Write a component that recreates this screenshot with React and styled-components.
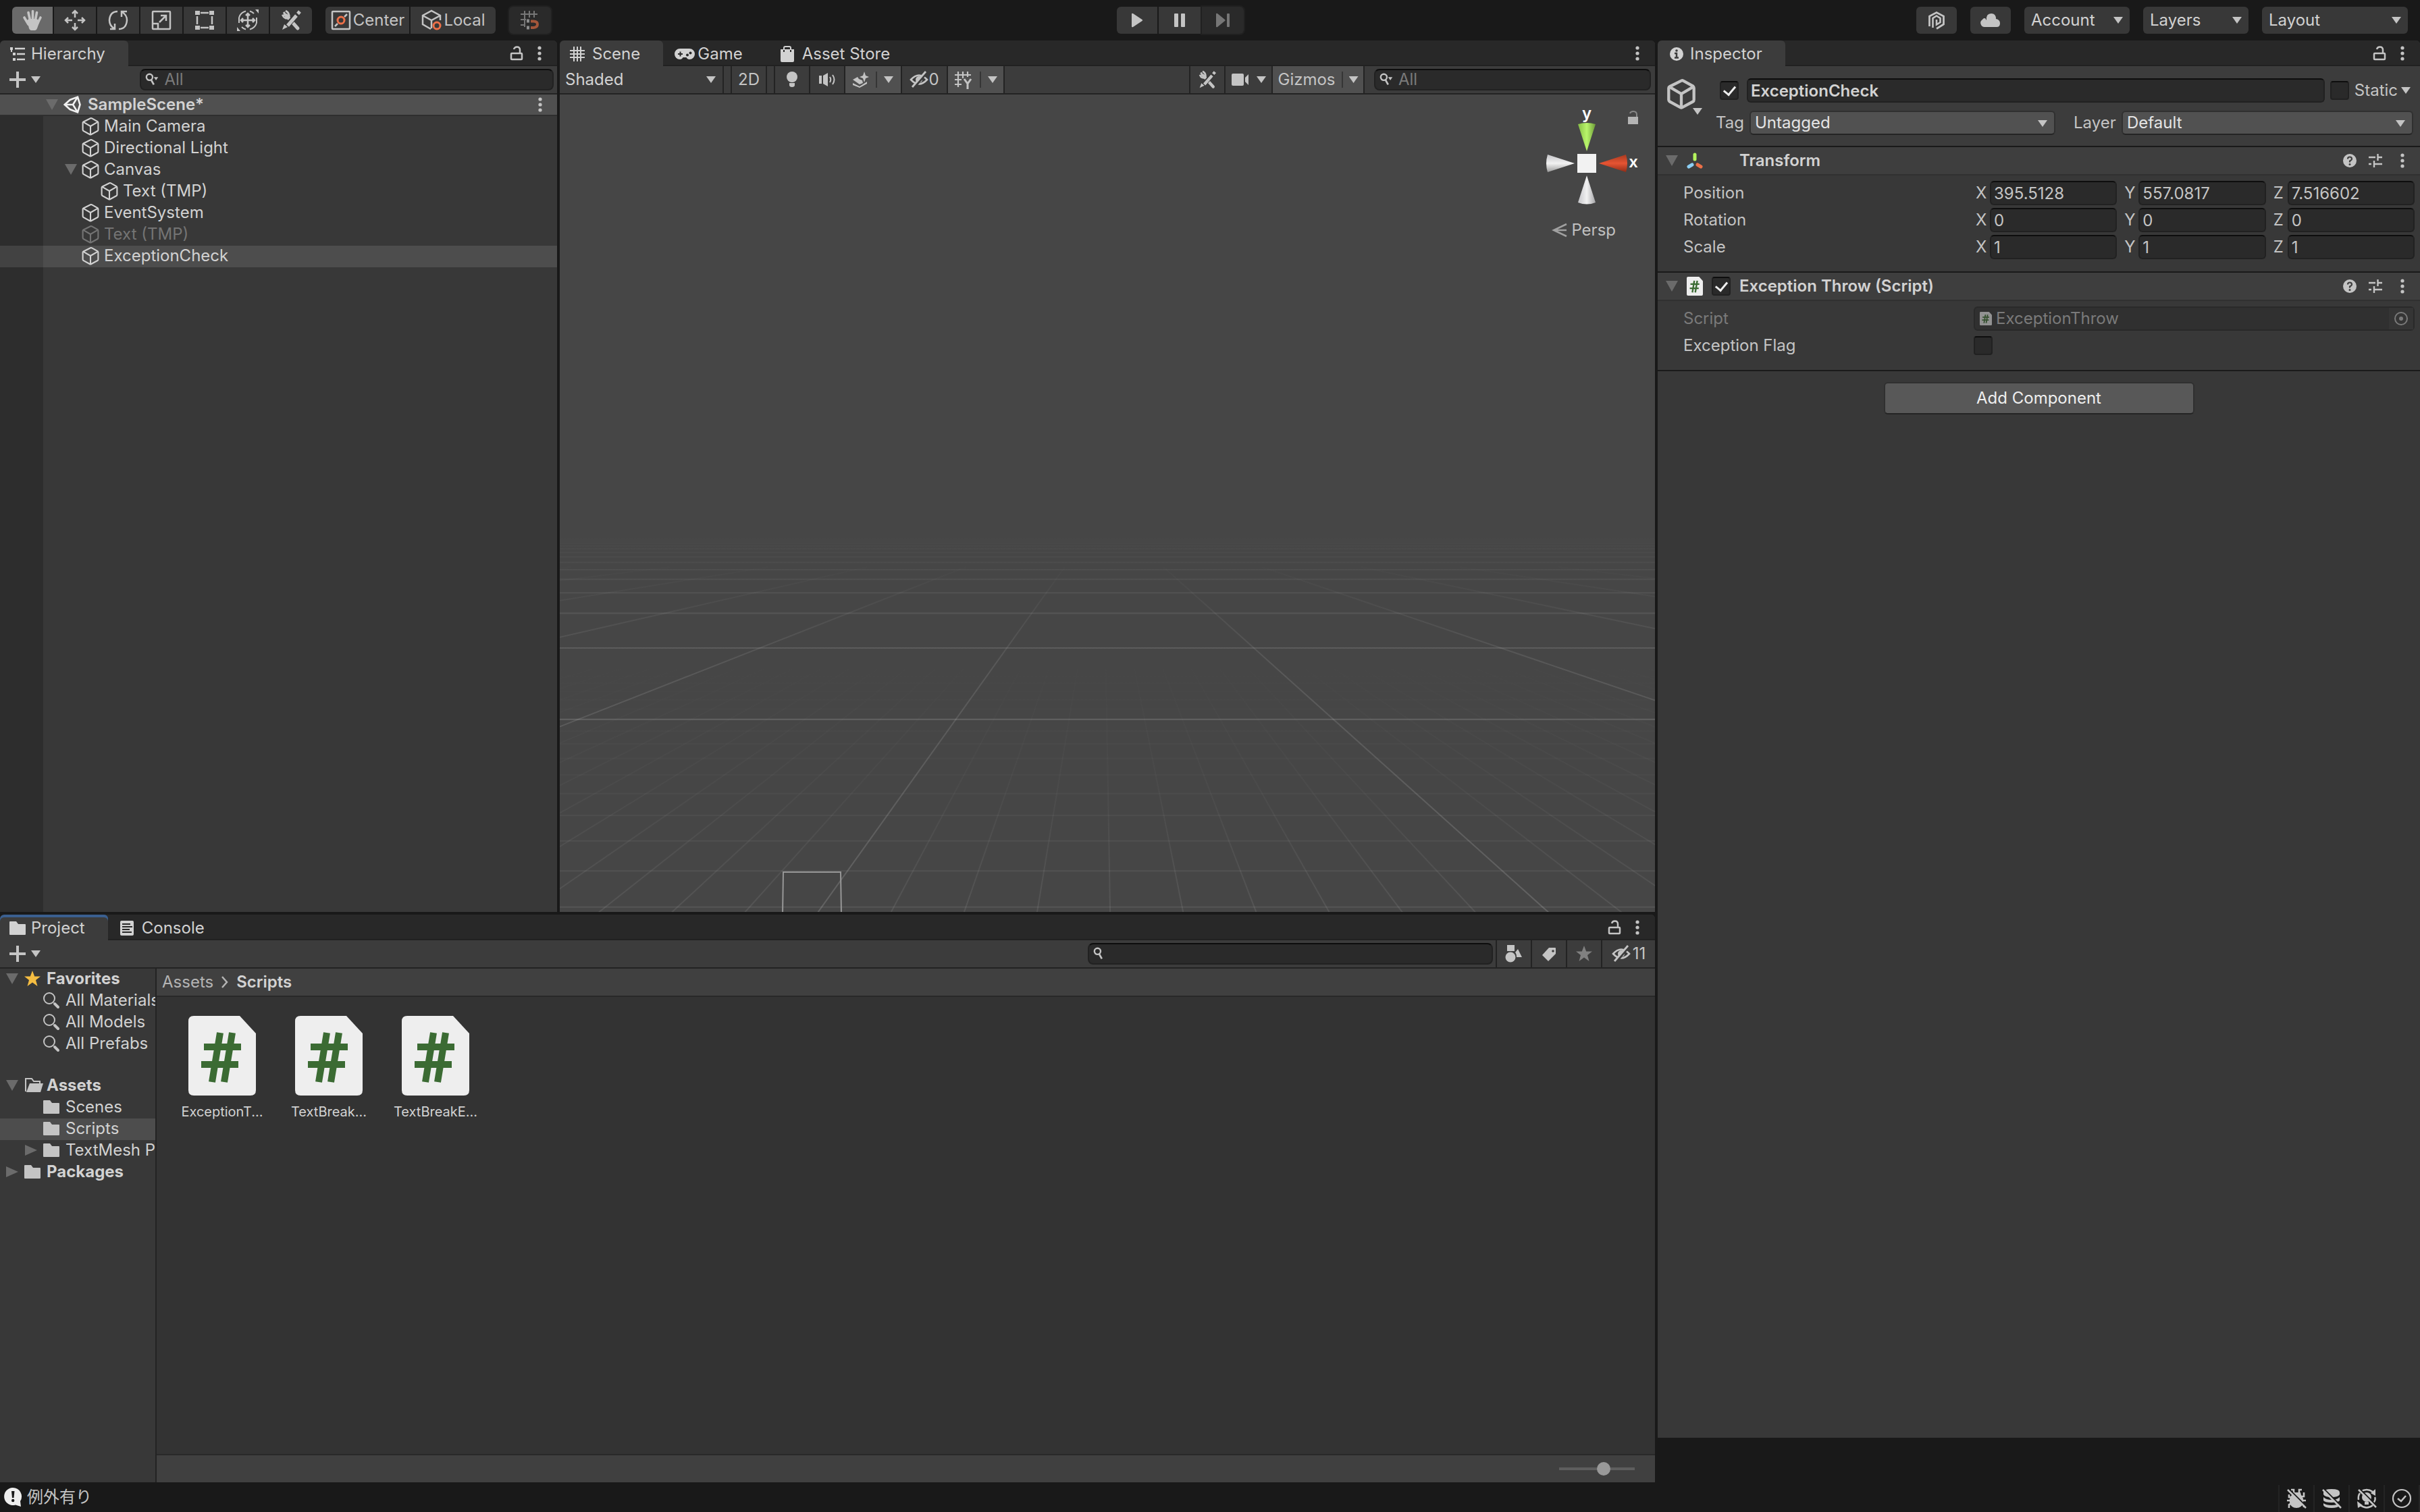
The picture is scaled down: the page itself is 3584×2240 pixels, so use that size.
import React from "react";
import styled, { createGlobalStyle, css } from "styled-components";

const GlobalStyle = createGlobalStyle`
  * {
    box-sizing: border-box;
  }
  body {
    margin: 0;
    background: #191919;
    color: #d2d2d2;
    font-family: Inter, "Noto Sans CJK JP", sans-serif;
    font-size: 24px;
    line-height: 32px;
  }
  button, input, select {
    font: inherit;
    color: inherit;
    margin: 0;
  }
  button {
    border: 0;
    padding: 0;
    background: none;
  }
  ul {
    list-style: none;
    margin: 0;
    padding: 0;
  }
`;

const Svg = styled.svg`
  display: block;
  flex: none;
  overflow: visible;
  fill: none;
  stroke: currentColor;
  stroke-width: 2.5;
`;

function Icon({ size = 32, box = 32, children }) {
  return (
    <Svg width={size} height={size} viewBox={`0 0 ${box} ${box}`} aria-hidden="true">
      {children}
    </Svg>
  );
}

const Solid = ({ d }) => <path d={d} fill="currentColor" stroke="none" />;

/* ---------- icons ---------- */

const HandIcon = () => (
  <Icon>
    <path d="M4 12L10 22M10 4.500L13 18M16.500 2.500V18M22.500 4.500L20 18M28 12L23 22" strokeWidth="3.600" strokeLinecap="round" />
    <Solid d="M8 16L11 28Q12 31 14 31H20Q22 31 23 28L27 17L22 14H11z" />
  </Icon>
);

const MoveIcon = () => (
  <Icon>
    <path d="M16 2V12M16 20V30M2 16H12M20 16H30" />
    <path d="M12 6L16 2L20 6M12 26L16 30L20 26M6 12L2 16L6 20M26 12L30 16L26 20" />
  </Icon>
);

const RotateIcon = () => (
  <Icon>
    <path d="M15 3Q4 3 3 16Q3 24 10 28M4 29H11V21" />
    <path d="M17 29Q28 29 29 16Q29 8 22 4M29 3H21V11" />
  </Icon>
);

const ScaleIcon = () => (
  <Icon>
    <rect x="3" y="3" width="26" height="26" rx="1" />
    <path d="M4 21H11V28M13 19L23 9M15 9H23V17" />
  </Icon>
);

const RectIcon = () => (
  <Icon>
    <path d="M10 5H22M10 27H22M5 10V22M27 10V22" />
    <Solid d="M2 2h7v6H2zM23 2h7v6h-7zM2 24h7v6H2zM23 24h7v6h-7z" />
  </Icon>
);

const TransformToolIcon = () => (
  <Icon>
    <path d="M16 6V26M6 16H26M13 9L16 6L19 9M13 23L16 26L19 23M9 13L6 16L9 19M23 13L26 16L23 19" />
    <path d="M3 12A14 14 0 0 1 13 2.500M19 2.500A14 14 0 0 1 25 6M29 12V20M29 20A14 14 0 0 1 19 29.500M13 29.500A14 14 0 0 1 7 26M3 20V12" strokeWidth="2" />
    <Solid d="M27 0H32V6zM0 26V32H5z" />
  </Icon>
);

const ToolsIcon = ({ size }) => (
  <Icon size={size}>
    <path d="M9 9L26 28" strokeWidth="5" strokeLinecap="round" />
    <path d="M5 4L8 8L4 9A6 6 0 0 0 13 12Q14 5 8 2" strokeWidth="3" />
    <path d="M28 4L10 24" strokeWidth="8" stroke="#383838" />
    <path d="M24 9L11 24" strokeWidth="5" />
    <path d="M29 3L26 6.500" strokeWidth="5" />
    <Solid d="M3 30L6 22L11 26z" />
  </Icon>
);

const PivotIcon = () => (
  <Icon>
    <rect x="3" y="3" width="26" height="26" rx="1" />
    <path d="M7 25L11 21M21 11L25 7" />
    <circle cx="16" cy="16" r="5" stroke="#ed7048" strokeWidth="3" />
  </Icon>
);

const LocalIcon = () => (
  <Icon>
    <path d="M15 29L3 22V9L16 2L29 9V16M3 9L16 16L29 9M16 16V28" />
    <circle cx="24" cy="24" r="5" stroke="#ed7048" strokeWidth="3" />
  </Icon>
);

const SnapIcon = () => (
  <Icon>
    <path d="M2 7H27M2 15H10M8 2V26M15 2V12M22 2V12M2 23H8" strokeWidth="2" />
    <path d="M11 17H16M11 27H16" strokeWidth="5" stroke="#8d8d8d" strokeDasharray="4 1" />
    <path d="M17 17.500H21Q27 17.500 27 22T21 27H17" strokeWidth="4" stroke="#a3563a" />
  </Icon>
);

const PlayIcon = () => (
  <Icon>
    <Solid d="M8 7Q8 5 10 6L23.500 15Q25 16 23.500 17L10 26Q8 27 8 25z" />
  </Icon>
);

const PauseIcon = () => (
  <Icon>
    <rect x="8" y="6" width="6" height="20" rx="1" fill="currentColor" stroke="none" />
    <rect x="18" y="6" width="6" height="20" rx="1" fill="currentColor" stroke="none" />
  </Icon>
);

const StepIcon = () => (
  <Icon>
    <Solid d="M6 7Q6 5 8 6L19 15Q20.500 16 19 17L8 26Q6 27 6 25z" />
    <rect x="22" y="6" width="4" height="20" rx="1" fill="currentColor" stroke="none" />
  </Icon>
);

const CollabIcon = () => (
  <Icon>
    <path d="M5.500 25V10L16 4.500L26.500 10V22L16 28.500" strokeWidth="2.800" />
    <path d="M10.500 27V13L16 9.500L21.500 13V19L16 22.500V15" strokeWidth="2.600" />
  </Icon>
);

const CloudIcon = () => (
  <Icon>
    <Solid d="M8 26A6 6 0 0 1 4 15Q5 12.500 8 13L10 16Q9 6 17 6Q24 6 24 14Q30 15 30 20.500Q30 26 25 26z" />
  </Icon>
);

const CubeIcon = ({ size = 32, weight = 2.4 }) => (
  <Icon size={size}>
    <path d="M16 2.500Q17 2 18 2.500L28 8Q29 9 29 10V22Q29 23.500 28 24L17 30Q16 30.500 15 30L4 24Q3 23 3 22V10Q3 9 4 8.500z" strokeWidth={weight} />
    <path d="M4 9L16 16L28 9M16 16V30" strokeWidth={weight} />
  </Icon>
);

const UnityIcon = () => (
  <Icon size={28}>
    <path d="M2 16L11 8L24 3L28 16L24 29L11 24zM2 16H16M16 16L24 3M16 16L24 29" stroke="#f0f0f0" strokeWidth="3" />
  </Icon>
);

const HierarchyIcon = () => (
  <Icon size={24} box={24}>
    <path d="M8 4H23M11 12H23M11 20H23" strokeWidth="2.600" />
    <Solid d="M1 2h4v4H1zM5 10h4v4H5zM5 18h4v4H5zM2 6h2v3H2z" />
  </Icon>
);

const LockIcon = () => (
  <Icon size={24} box={24}>
    <rect x="4" y="12" width="16" height="9" rx="1" />
    <path d="M8 6Q9 2.500 12.500 2.500Q17 2.500 17 7V12" />
  </Icon>
);

const KebabIcon = () => (
  <Icon size={24} box={24}>
    <circle cx="12" cy="4" r="2.600" fill="currentColor" stroke="none" />
    <circle cx="12" cy="12" r="2.600" fill="currentColor" stroke="none" />
    <circle cx="12" cy="20" r="2.600" fill="currentColor" stroke="none" />
  </Icon>
);

const PlusIcon = () => (
  <Icon size={24} box={24}>
    <path d="M12 0V24M0 12H24" strokeWidth="4" />
  </Icon>
);

const SearchIcon = ({ menu }) => (
  <Icon size={22} box={24}>
    <circle cx="7" cy="8" r="5" strokeWidth="2.600" />
    <path d="M10 13L14 20" strokeWidth="3" />
    {menu && <Solid d="M14 8H21L17.500 13z" />}
  </Icon>
);

const BigSearchIcon = () => (
  <Icon size={24} box={24}>
    <circle cx="9" cy="9" r="8" strokeWidth="2" />
    <path d="M17 17L22 22" strokeWidth="4" strokeLinecap="round" />
  </Icon>
);

const SceneIcon = () => (
  <Icon size={24} box={24}>
    <path d="M7 1V23M12 1V23M17 1V23M1 7H23M1 12H23M1 17H23" strokeWidth="2" />
  </Icon>
);

const GameIcon = () => (
  <Icon size={28} box={28}>
    <Solid d="M7 6H21A7.500 7.500 0 0 1 21 22Q18 22 16.500 19H11.500Q10 22 7 22A7.500 7.500 0 0 1 7 6z" />
    <path d="M4 14H11M7.500 10.500V17.500" stroke="#282828" strokeWidth="2" />
    <circle cx="18" cy="15.500" r="2" fill="#282828" stroke="none" />
    <circle cx="22.500" cy="12.500" r="2" fill="#282828" stroke="none" />
  </Icon>
);

const StoreIcon = () => (
  <Icon size={24} box={24}>
    <Solid d="M2 5H22V22Q22 24 20 24H4Q2 24 2 22z" />
    <path d="M7 6V3Q7 1 9 1H15Q17 1 17 3V6" strokeWidth="2" />
    <path d="M7 6V9M17 6V9" stroke="#282828" strokeWidth="2" />
  </Icon>
);

const InfoIcon = () => (
  <Icon size={20} box={20}>
    <circle cx="10" cy="10" r="10" fill="currentColor" stroke="none" />
    <path d="M7 9H10V15M7 15.500H13" stroke="#3c3c3c" strokeWidth="2.500" />
    <circle cx="10" cy="5" r="1.800" fill="#3c3c3c" stroke="none" />
  </Icon>
);

const BulbIcon = () => (
  <Icon size={24} box={24}>
    <circle cx="12" cy="8" r="8" fill="currentColor" stroke="none" />
    <Solid d="M8 17H16V20Q16 23 12 23T8 20z" />
  </Icon>
);

const AudioIcon = () => (
  <Icon size={24} box={24}>
    <Solid d="M0 6H4V18H0zM6 6L13 2V22L6 18z" />
    <path d="M16 8Q18.500 12 16 16M20 5Q25 12 20 19" strokeWidth="2" />
  </Icon>
);

const EffectsIcon = () => (
  <Icon size={24} box={24}>
    <Solid d="M17 0L19 6L24 8L19 10L17 16L15 10L10 8L15 6zM0 12L7 8L9 11L14 13L15 17L10 19zM0 17L10 22L21 15V18L10 24L0 20z" />
  </Icon>
);

const HiddenIcon = () => (
  <Icon size={28} box={28}>
    <path d="M2 14Q14 1 26 14Q14 27 2 14z" strokeWidth="2.600" />
    <circle cx="14" cy="14" r="5" fill="currentColor" stroke="none" />
    <path d="M5 27L25 3" stroke="#3c3c3c" strokeWidth="5" />
    <path d="M4 25L24 2" strokeWidth="2.800" />
  </Icon>
);

const GridAxisIcon = () => (
  <Icon size={28} box={28}>
    <path d="M1 7H25M1 14H11M1 21H11M6 2V25M13 2V12M20 2V10" strokeWidth="2.200" />
    <path d="M15 13L20 20L25 13M20 20V28" strokeWidth="3" />
  </Icon>
);

const CameraIcon = () => (
  <Icon size={28} box={28}>
    <rect x="1" y="5" width="18" height="18" rx="2" fill="currentColor" stroke="none" />
    <Solid d="M21 11L26 6V22L21 17z" />
  </Icon>
);

const FolderIcon = () => (
  <Icon size={24} box={24}>
    <Solid d="M0 3Q0 2 1 2H10L13 6H23Q24 6 24 7V21Q24 22 23 22H1Q0 22 0 21z" />
  </Icon>
);

const OpenFolderIcon = () => (
  <Icon size={28} box={28}>
    <path d="M2 23V4H11L14 8H23V11" strokeWidth="2" />
    <Solid d="M8 11H28L24 24H3z" />
  </Icon>
);

const ConsoleIcon = () => (
  <Icon size={22} box={22}>
    <rect x="0" y="0" width="20" height="22" rx="2" fill="currentColor" stroke="none" />
    <path d="M3 5H15M3 9H18M3 13H14M3 17H17" stroke="#282828" strokeWidth="1.800" />
  </Icon>
);

const StarIcon = ({ color = "currentColor" }) => (
  <Icon size={24} box={24}>
    <path d="M12 0L15.200 8.500H24L17 14L19.500 23L12 17.500L4.500 23L7 14L0 8.500H8.800z" fill={color} stroke="none" />
  </Icon>
);

const FilterTypeIcon = () => (
  <Icon size={26} box={26}>
    <Solid d="M3 0H14V9H3zM19 6L25 18H17Q17 13 15 11z" />
    <circle cx="8" cy="18" r="7.500" fill="currentColor" stroke="none" />
  </Icon>
);

const LabelIcon = () => (
  <Icon size={24} box={24}>
    <path d="M12 3H21Q22 3 22 4V12L11 23L2 14z" fill="currentColor" stroke="none" />
    <circle cx="18" cy="8" r="1.800" fill="#3c3c3c" stroke="none" />
  </Icon>
);

const HelpIcon = () => (
  <Icon size={20} box={20}>
    <circle cx="10" cy="10" r="10" fill="currentColor" stroke="none" />
    <path d="M7 7.500Q7 4.500 10 4.500T13 7.500Q13 9 10 10.500V12.500" stroke="#3e3e3e" strokeWidth="2.200" />
    <circle cx="10" cy="15.500" r="1.500" fill="#3e3e3e" stroke="none" />
  </Icon>
);

const PresetIcon = () => (
  <Icon size={20} box={20}>
    <path d="M0 5H10M13.500 0V10M13 5H20M0 15H4M8 10V20M8 15H20" strokeWidth="2.400" />
  </Icon>
);

const AxesIcon = () => (
  <Icon size={24} box={24}>
    <g strokeWidth="5" strokeLinecap="round">
      <path d="M12 3V10" stroke="#b4f35d" />
      <path d="M8 18L3 21" stroke="#8ccff5" />
      <path d="M16 18L21 21" stroke="#ed7048" />
    </g>
  </Icon>
);

function ScriptIcon({ width, height, paper = "#eeeeee", ink = "#3b6b33" }) {
  return (
    <Svg width={width} height={height} viewBox="0 0 100 118" preserveAspectRatio="none" aria-hidden="true">
      <path d="M8 0H76L100 26V110Q100 118 92 118H8Q0 118 0 110V8Q0 0 8 0z" fill={paper} stroke="none" />
      <path d="M47 25L35 98M65 25L53 98M23 46H78M19 72H74" stroke={ink} strokeWidth="10" />
    </Svg>
  );
}

const TargetIcon = () => (
  <Icon size={20} box={20}>
    <circle cx="10" cy="10" r="9" strokeWidth="2" />
    <circle cx="10" cy="10" r="3" fill="currentColor" stroke="none" />
  </Icon>
);

const ChevronIcon = () => (
  <Icon size={20} box={20}>
    <path d="M6 2L13 10L6 18" />
  </Icon>
);

const AlertIcon = () => (
  <Icon size={28} box={28}>
    <Solid d="M13 0A13 13 0 1 0 17 25.400L25 28L24 20A13 13 0 0 0 13 0z" />
    <path d="M11 5H15.500L14.500 15H12z" fill="#191919" stroke="none" />
    <circle cx="13.200" cy="19" r="2.200" fill="#191919" stroke="none" />
  </Icon>
);

const BugIcon = () => (
  <Icon size={28} box={28}>
    <Solid d="M8 5H20L21 9Q25 13 24 20Q22 28 14 28T4 20Q3 13 7 9z" />
    <path d="M6 1H10V5M22 1H18V5M0 17H6M22 17H28M3 8V12H8M25 5V11H21M3 28V23L7 21M25 27V23L21 21" strokeWidth="2.600" />
    <path d="M3 0L28 25" stroke="#191919" strokeWidth="2" />
    <path d="M1 1L28 28" />
  </Icon>
);

const CacheIcon = () => (
  <Icon size={28} box={28}>
    <Solid d="M2 5Q2 0 14 0T26 5V8Q24 12 14 12T2 8zM2 12Q6 16 14 16T26 12V17Q24 20 14 20T2 17zM2 21Q6 24 14 24T26 21V24Q24 28 14 28T2 24z" />
    <path d="M3 0L28 25" stroke="#191919" strokeWidth="2" />
    <path d="M1 1L28 28" />
  </Icon>
);

const LightingIcon = () => (
  <Icon size={28} box={28}>
    <circle cx="14" cy="12" r="7" fill="currentColor" stroke="none" />
    <path d="M11 21H17" strokeWidth="4" />
    <path d="M5 4Q14 -2 23 4M26 12Q28 15 24 21M23 24Q14 31 5 24M2 16Q1 10 4 6" />
    <Solid d="M20 6L27 0V10zM0 18L1 28L8 24z" />
    <path d="M4 0L28 24" stroke="#191919" strokeWidth="2" />
    <path d="M2 1L28 27" />
  </Icon>
);

const ReadyIcon = () => (
  <Icon size={28} box={28}>
    <circle cx="14" cy="14" r="13" strokeWidth="2.200" />
    <path d="M8 14L13 18L20 10" />
  </Icon>
);

/* ---------- shared parts ---------- */

const Arrow = styled.span`
  flex: none;
  display: block;
  width: ${(p) => (p.$large ? 18 : 14)}px;
  height: ${(p) => (p.$large ? 16 : 10)}px;
  background: ${(p) => (p.$large ? "#6b6b6b" : "#c4c4c4")};
  clip-path: ${(p) => (p.$closed ? "polygon(0 0, 100% 50%, 0 100%)" : "polygon(0 0, 100% 0, 50% 100%)")};
`;

const Panel = styled.section`
  display: flex;
  flex-direction: column;
  min-width: 0;
  min-height: 0;
  overflow: hidden;
  background: #383838;
  border-radius: 6px 6px 0 0;
`;

const TabBar = styled.div`
  flex: none;
  display: flex;
  height: 38px;
  background: #282828;
  box-shadow: inset 0 -2px #212121;
`;

const Tab = styled.button`
  display: flex;
  align-items: center;
  gap: ${(p) => p.$gap || 10}px;
  padding: 2px 16px 0 18px;
  ${(p) =>
    p.$active &&
    css`
      background: #3c3c3c;
      border-radius: 6px 6px 0 0;
      padding-left: 14px;
      padding-right: 34px;
    `}
  ${(p) =>
    p.$focused &&
    css`
      box-shadow: inset 0 4px #3a5f8f;
    `}
`;

const TabActions = styled.div`
  display: flex;
  align-items: center;
  gap: 10px;
  margin-left: auto;
  padding-right: 14px;
  color: #c4c4c4;
`;

const IconButton = styled.button`
  display: flex;
  align-items: center;
  justify-content: center;
  gap: 8px;
  color: #c4c4c4;
`;

const ToolStrip = styled.div`
  flex: none;
  display: flex;
  align-items: stretch;
  height: 42px;
  background: #3c3c3c;
  border-bottom: 2px solid #232323;
`;

const StripButton = styled.button`
  display: flex;
  align-items: center;
  justify-content: center;
  gap: ${(p) => p.$gap || 0}px;
  width: ${(p) => p.$width}px;
  border-right: 2px solid #232323;
  color: ${(p) => (p.$dim ? "#808080" : "#c4c4c4")};
  background: ${(p) => (p.$on ? "#505050" : "transparent")};
`;

const Divider = styled.span`
  width: 2px;
  height: 24px;
  background: #353535;
`;

const Spacer = styled.div`
  flex: 1;
`;

const field = css`
  background: #2a2a2a;
  border: 2px solid #212121;
  border-top-color: #0d0d0d;
  border-radius: 6px;
`;

const SearchBox = styled.label`
  ${field}
  display: flex;
  align-items: center;
  gap: 6px;
  align-self: center;
  width: ${(p) => p.$width};
  height: 32px;
  padding: 0 6px;
  border-radius: 8px;
  color: #c4c4c4;
`;

const SearchInput = styled.input.attrs({ type: "text" })`
  flex: 1;
  min-width: 0;
  height: 28px;
  border: 0;
  padding: 0;
  outline: 0;
  background: none;
  &::placeholder {
    color: #7a7a7a;
    opacity: 1;
  }
`;

const CheckBox = styled.input.attrs({ type: "checkbox" })`
  ${field}
  flex: none;
  appearance: none;
  display: grid;
  place-items: center;
  width: 28px;
  height: 28px;
  border-radius: 4px;
  &:checked::after {
    content: "";
    width: 8px;
    height: 14px;
    margin-bottom: 4px;
    border: solid #eeeeee;
    border-width: 0 3px 3px 0;
    transform: rotate(40deg);
  }
`;

/* ---------- top toolbar ---------- */

const Shell = styled.div`
  display: grid;
  grid-template-rows: 60px minmax(0, 1fr) 44px;
  height: 100vh;
`;

const TopBar = styled.header`
  display: grid;
  grid-template-columns: 1636fr auto 1724fr;
  align-items: center;
  padding: 0 18px;
`;

const Group = styled.div`
  display: flex;
  justify-content: ${(p) => p.$align || "flex-start"};
  gap: 20px;
`;

const Segments = styled.div`
  display: flex;
  gap: 2px;
  & > button:first-child {
    border-radius: 6px 0 0 6px;
  }
  & > button:last-child {
    border-radius: 0 6px 6px 0;
  }
`;

const ToolButton = styled.button`
  display: flex;
  align-items: center;
  justify-content: center;
  gap: 2px;
  width: ${(p) => p.$width || 62}px;
  height: 40px;
  color: #c4c4c4;
  background: ${(p) => (p.$active ? "#6a6a6a" : "#383838")};
  ${(p) =>
    p.$single &&
    css`
      border-radius: 6px;
    `}
  &:disabled {
    color: #767676;
    background: #2a2a2a;
    box-shadow: 0 0 0 2px #202020;
  }
`;

const TopSelect = styled.button`
  display: flex;
  align-items: center;
  justify-content: space-between;
  width: ${(p) => p.$width}px;
  height: 40px;
  padding: 0 10px;
  border-radius: 6px;
  background: #383838;
`;

function TopToolbar() {
  return (
    <TopBar>
      <Group>
        <Segments>
          <ToolButton $width={60} $active aria-label="Hand tool"><HandIcon /></ToolButton>
          <ToolButton aria-label="Move tool"><MoveIcon /></ToolButton>
          <ToolButton aria-label="Rotate tool"><RotateIcon /></ToolButton>
          <ToolButton aria-label="Scale tool"><ScaleIcon /></ToolButton>
          <ToolButton aria-label="Rect tool"><RectIcon /></ToolButton>
          <ToolButton aria-label="Transform tool"><TransformToolIcon /></ToolButton>
          <ToolButton aria-label="Custom tools"><ToolsIcon /></ToolButton>
        </Segments>
        <Segments>
          <ToolButton $width={124}><PivotIcon />Center</ToolButton>
          <ToolButton $width={126}><LocalIcon />Local</ToolButton>
        </Segments>
        <ToolButton $single disabled aria-label="Grid snapping"><SnapIcon /></ToolButton>
      </Group>
      <Segments>
        <ToolButton $width={60} aria-label="Play"><PlayIcon /></ToolButton>
        <ToolButton aria-label="Pause"><PauseIcon /></ToolButton>
        <ToolButton disabled aria-label="Step"><StepIcon /></ToolButton>
      </Segments>
      <Group $align="flex-end">
        <ToolButton $width={60} $single aria-label="Collaborate"><CollabIcon /></ToolButton>
        <ToolButton $width={60} $single aria-label="Services"><CloudIcon /></ToolButton>
        <TopSelect $width={156}>Account<Arrow /></TopSelect>
        <TopSelect $width={156}>Layers<Arrow /></TopSelect>
        <TopSelect $width={216}>Layout<Arrow /></TopSelect>
      </Group>
    </TopBar>
  );
}

/* ---------- workspace ---------- */

const Workspace = styled.main`
  display: grid;
  grid-template-columns: minmax(0, 2451fr) minmax(0, 1129fr);
  gap: 4px;
  min-height: 0;
`;

const LeftArea = styled.div`
  display: grid;
  grid-template-rows: minmax(0, 1291fr) minmax(0, 841fr);
  gap: 4px;
  min-height: 0;
`;

const UpperArea = styled.div`
  display: grid;
  grid-template-columns: minmax(0, 825fr) minmax(0, 1622fr);
  gap: 4px;
  min-height: 0;
`;

/* ---------- hierarchy ---------- */

const CreateStrip = styled(ToolStrip)`
  justify-content: space-between;
  padding: 0 5px 0 14px;
`;

const SceneRow = styled.div`
  flex: none;
  display: flex;
  align-items: center;
  height: 32px;
  padding: 0 13px 0 68px;
  background: #505050;
  border-bottom: 2px solid #2e2e2e;
  font-weight: 600;
  gap: 8px;
`;

const Tree = styled.ul`
  flex: 1;
  background: linear-gradient(to right, #2d2d2d 64px, transparent 64px);
`;

const TreeItem = styled.li`
  display: flex;
  background: ${(p) => (p.$selected ? "linear-gradient(to right, #424242 64px, #4d4d4d 64px)" : "none")};
`;

const TreeButton = styled.button`
  flex: 1;
  display: flex;
  align-items: center;
  gap: 6px;
  height: 32px;
  padding: 0 0 2px ${(p) => 96 + p.$depth * 28}px;
  color: ${(p) => (p.$dim ? "#747474" : "#d2d2d2")};
`;

const ArrowSlot = styled.span`
  flex: none;
  display: flex;
  width: 18px;
`;

const objects = [
  { name: "Main Camera", depth: 0 },
  { name: "Directional Light", depth: 0 },
  { name: "Canvas", depth: 0, open: true },
  { name: "Text (TMP)", depth: 1 },
  { name: "EventSystem", depth: 0 },
  { name: "Text (TMP)", depth: 0, dim: true },
  { name: "ExceptionCheck", depth: 0, selected: true },
];

function Hierarchy() {
  return (
    <Panel>
      <TabBar>
        <Tab $active $gap={8}><HierarchyIcon />Hierarchy</Tab>
        <TabActions>
          <IconButton aria-label="Lock"><LockIcon /></IconButton>
          <IconButton aria-label="Menu"><KebabIcon /></IconButton>
        </TabActions>
      </TabBar>
      <CreateStrip>
        <IconButton aria-label="Create"><PlusIcon /><Arrow /></IconButton>
        <SearchBox $width="76%">
          <SearchIcon menu />
          <SearchInput placeholder="All" aria-label="Search hierarchy" />
        </SearchBox>
      </CreateStrip>
      <SceneRow>
        <Arrow $large />
        <UnityIcon />
        <span>SampleScene*</span>
        <Spacer />
        <IconButton aria-label="Scene menu"><KebabIcon /></IconButton>
      </SceneRow>
      <Tree>
        {objects.map((o, i) => (
          <TreeItem key={i} $selected={o.selected}>
            <TreeButton $depth={o.depth} $dim={o.dim}>
              <ArrowSlot>{o.open && <Arrow $large />}</ArrowSlot>
              <CubeIcon size={28} />
              {o.name}
            </TreeButton>
          </TreeItem>
        ))}
      </Tree>
    </Panel>
  );
}

/* ---------- scene view ---------- */

const Viewport = styled.div`
  position: relative;
  flex: 1;
  min-height: 0;
  overflow: hidden;
  background: #464646;
`;

const GridDrawing = styled.svg`
  position: absolute;
  inset: 0;
  width: 100%;
  height: 100%;
`;

const Gizmo = styled.svg`
  position: absolute;
  top: 8px;
  right: 24px;
  width: 140px;
  height: 170px;
  font-size: 24px;
  line-height: 24px;
  font-weight: 600;
`;

const Projection = styled.button`
  position: absolute;
  top: 185px;
  right: 58px;
  display: flex;
  align-items: center;
  gap: 6px;
  color: #c0c0c0;
`;

const ViewLock = styled.button`
  position: absolute;
  top: 24px;
  right: 23px;
  color: #b4b4b4;
`;

const ShadingButton = styled(StripButton)`
  justify-content: space-between;
  padding: 0 10px 0 8px;
  color: #d2d2d2;
`;

const Gap = styled.span`
  width: 12px;
  border-right: 2px solid #232323;
`;

const SearchCell = styled.div`
  display: flex;
  padding: 0 6px 0 14px;
`;

const VX = 805;
const VY = 620;

/* perspective ground grid, every tenth line is a major one */
function GroundGrid() {
  const rays = [];
  for (let i = -64; i <= 76; i++) {
    const major = (i + 4) % 10 === 0;
    const slope = (10 + i * 107) / 585;
    const from = major ? 80 : 220;
    rays.push(
      <line
        key={i}
        x1={VX + slope * from}
        y1={VY + from}
        x2={VX + slope * 640}
        y2={VY + 640}
        stroke={major ? "url(#majorRay)" : "url(#minor)"}
      />
    );
  }
  const rows = [];
  for (let k = -10; k <= 130; k++) {
    const major = k % 10 === 0;
    const d = 1 / (0.00327 + k * 0.000173);
    if (!major && d < 220) continue;
    rows.push(
      <line key={k} x1="0" x2="1622" y1={VY + d} y2={VY + d + 0.01} stroke={major ? "url(#majorRow)" : "url(#minor)"} />
    );
  }
  return (
    <GridDrawing viewBox="0 0 1622 1211" preserveAspectRatio="xMidYMax slice" aria-hidden="true">
      <defs>
        <linearGradient id="majorRow" gradientUnits="userSpaceOnUse" x1="0" y1="660" x2="0" y2="1211">
          <stop offset="0" stopColor="#fff" stopOpacity="0.01" />
          <stop offset="0.25" stopColor="#fff" stopOpacity="0.11" />
          <stop offset="0.6" stopColor="#fff" stopOpacity="0.17" />
          <stop offset="1" stopColor="#fff" stopOpacity="0.17" />
        </linearGradient>
        <linearGradient id="majorRay" gradientUnits="userSpaceOnUse" x1="0" y1="690" x2="0" y2="1211">
          <stop offset="0" stopColor="#fff" stopOpacity="0" />
          <stop offset="0.3" stopColor="#fff" stopOpacity="0.1" />
          <stop offset="1" stopColor="#fff" stopOpacity="0.15" />
        </linearGradient>
        <linearGradient id="minor" gradientUnits="userSpaceOnUse" x1="0" y1="830" x2="0" y2="1211">
          <stop offset="0" stopColor="#fff" stopOpacity="0" />
          <stop offset="0.5" stopColor="#fff" stopOpacity="0.025" />
          <stop offset="1" stopColor="#fff" stopOpacity="0.08" />
        </linearGradient>
      </defs>
      <g strokeWidth="2" fill="none">
        {rays}
        {rows}
        <path d="M330 1215L331 1152H416L417 1215" stroke="#979797" />
      </g>
    </GridDrawing>
  );
}

function SceneGizmo() {
  return (
    <Gizmo viewBox="0 -10 140 170" role="img" aria-label="Scene orientation">
      <defs>
        <linearGradient id="green"><stop offset="0" stopColor="#86bd45" /><stop offset="0.5" stopColor="#b9f56b" /><stop offset="1" stopColor="#6c9a38" /></linearGradient>
        <linearGradient id="red" x2="0" y2="1"><stop offset="0" stopColor="#a83a20" /><stop offset="0.5" stopColor="#e65433" /><stop offset="1" stopColor="#8f2c16" /></linearGradient>
        <linearGradient id="white"><stop offset="0" stopColor="#c4c4c8" /><stop offset="0.5" stopColor="#f2f2f2" /><stop offset="1" stopColor="#a5a5a8" /></linearGradient>
        <linearGradient id="side" x2="0" y2="1"><stop offset="0" stopColor="#c4c4c8" /><stop offset="0.5" stopColor="#f2f2f2" /><stop offset="1" stopColor="#9a9a9a" /></linearGradient>
      </defs>
      <path d="M50 26Q63 22 76 26L63 66z" fill="url(#green)" />
      <path d="M121 71Q125 84 121 97L81 84z" fill="url(#red)" />
      <path d="M5 71Q1 84 5 97L45 84z" fill="url(#side)" />
      <path d="M50 142Q63 147 76 142L63 102z" fill="url(#white)" />
      <rect x="49" y="70" width="28" height="28" fill="#f2f2f2" />
      <text x="63" y="18" textAnchor="middle" fill="#fff">y</text>
      <text x="132" y="90" textAnchor="middle" fill="#fff">x</text>
    </Gizmo>
  );
}

function SceneView() {
  return (
    <Panel>
      <TabBar>
        <Tab $active><SceneIcon />Scene</Tab>
        <Tab $gap={5}><GameIcon />Game</Tab>
        <Tab><SceneStoreSlot><StoreIcon /></SceneStoreSlot>Asset Store</Tab>
        <TabActions>
          <IconButton aria-label="Menu"><KebabIcon /></IconButton>
        </TabActions>
      </TabBar>
      <ToolStrip>
        <ShadingButton $width={243}>Shaded<Arrow /></ShadingButton>
        <Gap />
        <StripButton $width={52}>2D</StripButton>
        <Gap />
        <StripButton $width={52} aria-label="Lighting"><BulbIcon /></StripButton>
        <StripButton $width={52} aria-label="Audio"><AudioIcon /></StripButton>
        <StripButton $width={84} $gap={10} $on aria-label="Effects"><EffectsIcon /><Divider /><Arrow /></StripButton>
        <StripButton $width={68}><HiddenIcon />0</StripButton>
        <StripButton $width={84} $gap={10} $on aria-label="Grid"><GridAxisIcon /><Divider /><Arrow /></StripButton>
        <Spacer />
        <Gap />
        <StripButton $width={52} aria-label="Tools"><ToolsIcon size={28} /></StripButton>
        <StripButton $width={70} $gap={10} aria-label="Camera"><CameraIcon /><Arrow /></StripButton>
        <StripButton $width={136} $gap={9} $on>Gizmos<Divider /><Arrow /></StripButton>
        <SearchCell>
          <SearchBox $width="410px">
            <SearchIcon menu />
            <SearchInput placeholder="All" aria-label="Search scene" />
          </SearchBox>
        </SearchCell>
      </ToolStrip>
      <Viewport>
        <GroundGrid />
        <SceneGizmo />
        <ViewLock aria-label="Lock rotation">
          <Icon size={20} box={20}>
            <Solid d="M3 9H18V20H3z" />
            <path d="M6 4Q7 1 11 1Q16 1 16 6V9" strokeWidth="2" opacity="0.6" />
          </Icon>
        </ViewLock>
        <Projection>
          <Icon size={22} box={22}>
            <path d="M21 2L2 11L21 20M2 11H21" stroke="#a0a0a0" />
          </Icon>
          Persp
        </Projection>
      </Viewport>
    </Panel>
  );
}

const SceneStoreSlot = styled.span`
  padding-left: 20px;
`;

/* ---------- project ---------- */

const ProjectBody = styled.div`
  flex: 1;
  display: grid;
  grid-template-columns: 232px minmax(0, 1fr);
  min-height: 0;
`;

const FolderTree = styled.ul`
  overflow: hidden;
  border-right: 2px solid #232323;
`;

const FolderItem = styled.li`
  height: 32px;
  margin-top: ${(p) => (p.$spaced ? 30 : 0)}px;
  background: ${(p) => (p.$selected ? "#4d4d4d" : "none")};
`;

const FolderButton = styled.button`
  display: flex;
  align-items: center;
  gap: 9px;
  height: 32px;
  padding: 0 0 2px ${(p) => 9 + p.$depth * 28}px;
  white-space: nowrap;
  font-weight: ${(p) => (p.$depth ? 400 : 700)};
`;

const FolderIconSlot = styled.span`
  flex: none;
  display: flex;
  width: 24px;
  color: #c4c4c4;
`;

const AssetArea = styled.div`
  display: flex;
  flex-direction: column;
  min-height: 0;
  background: #333333;
`;

const Breadcrumb = styled.nav`
  flex: none;
  display: flex;
  align-items: center;
  gap: 7px;
  height: 42px;
  padding: 0 8px;
  background: #404040;
  border-bottom: 2px solid #292929;
  color: #b4b4b4;
  & a {
    color: #b4b4b4;
    text-decoration: none;
  }
  & a:last-child {
    color: #d2d2d2;
    font-weight: 600;
  }
`;

const AssetGrid = styled.div`
  flex: 1;
  display: flex;
  align-content: flex-start;
  gap: 18px;
  padding: 28px 27px;
`;

const Asset = styled.button`
  display: flex;
  flex-direction: column;
  align-items: center;
  align-self: flex-start;
  gap: 8px;
  width: 140px;
  font-size: 20px;
`;

const AssetFooter = styled.div`
  flex: none;
  display: flex;
  align-items: center;
  justify-content: flex-end;
  height: 42px;
  padding-right: 30px;
  background: #404040;
  border-top: 2px solid #292929;
`;

const SizeSlider = styled.input.attrs({ type: "range" })`
  appearance: none;
  width: 112px;
  height: 20px;
  background: linear-gradient(#5e5e5e, #5e5e5e) center / 100% 4px no-repeat;
  &::-webkit-slider-thumb {
    appearance: none;
    width: 20px;
    height: 20px;
    border-radius: 50%;
    background: #999999;
  }
`;

const folders = [
  { name: "Favorites", depth: 0, arrow: "open", icon: <StarIcon color="#f5bd42" /> },
  { name: "All Materials", depth: 1, icon: <BigSearchIcon /> },
  { name: "All Models", depth: 1, icon: <BigSearchIcon /> },
  { name: "All Prefabs", depth: 1, icon: <BigSearchIcon /> },
  { name: "Assets", depth: 0, arrow: "open", icon: <OpenFolderIcon />, spaced: true },
  { name: "Scenes", depth: 1, icon: <FolderIcon /> },
  { name: "Scripts", depth: 1, icon: <FolderIcon />, selected: true },
  { name: "TextMesh Pro", depth: 1, arrow: "closed", icon: <FolderIcon /> },
  { name: "Packages", depth: 0, arrow: "closed", icon: <FolderIcon /> },
];

const assets = ["ExceptionT...", "TextBreak...", "TextBreakE..."];

function Project() {
  return (
    <Panel>
      <TabBar>
        <Tab $active $focused $gap={8}><FolderIcon />Project</Tab>
        <Tab><ConsoleIcon />Console</Tab>
        <TabActions>
          <IconButton aria-label="Lock"><LockIcon /></IconButton>
          <IconButton aria-label="Menu"><KebabIcon /></IconButton>
        </TabActions>
      </TabBar>
      <ToolStrip>
        <CreateCell aria-label="Create asset"><PlusIcon /><Arrow /></CreateCell>
        <Spacer />
        <SearchBox $width="600px">
          <SearchIcon />
          <SearchInput aria-label="Search project" />
        </SearchBox>
        <SmallGap />
        <StripButton $width={52} aria-label="Search by type"><FilterTypeIcon /></StripButton>
        <StripButton $width={52} aria-label="Search by label"><LabelIcon /></StripButton>
        <StripButton $width={52} $dim aria-label="Save search"><StarIcon /></StripButton>
        <HiddenCount $width={78} $gap={3}><HiddenIcon />11</HiddenCount>
      </ToolStrip>
      <ProjectBody>
        <FolderTree>
          {folders.map((f) => (
            <FolderItem key={f.name} $selected={f.selected} $spaced={f.spaced}>
              <FolderButton $depth={f.depth}>
                <ArrowSlot>{f.arrow && <Arrow $large $closed={f.arrow === "closed"} />}</ArrowSlot>
                <FolderIconSlot>{f.icon}</FolderIconSlot>
                {f.name}
              </FolderButton>
            </FolderItem>
          ))}
        </FolderTree>
        <AssetArea>
          <Breadcrumb>
            <a href="#assets">Assets</a>
            <ChevronIcon />
            <a href="#scripts">Scripts</a>
          </Breadcrumb>
          <AssetGrid>
            {assets.map((name) => (
              <Asset key={name}>
                <ScriptIcon width={100} height={118} />
                {name}
              </Asset>
            ))}
          </AssetGrid>
          <AssetFooter>
            <SizeSlider aria-label="Icon size" min="0" max="100" defaultValue="61" />
          </AssetFooter>
        </AssetArea>
      </ProjectBody>
    </Panel>
  );
}

const CreateCell = styled(IconButton)`
  padding-left: 14px;
`;

const SmallGap = styled.span`
  width: 6px;
  border-right: 2px solid #232323;
`;

const HiddenCount = styled(StripButton)`
  border-right: 0;
`;

/* ---------- inspector ---------- */

const InspectorPanel = styled(Panel)`
  margin-bottom: 66px;
`;

const ObjectHeader = styled.div`
  display: flex;
  gap: 30px;
  height: 120px;
  padding: 18px 10px 0 12px;
  background: #3c3c3c;
  border-bottom: 2px solid #1a1a1a;
`;

const ObjectIcon = styled.button`
  position: relative;
  width: 44px;
  height: 46px;
  color: #c4c4c4;
  & > span {
    position: absolute;
    right: -10px;
    bottom: -8px;
  }
`;

const HeaderLines = styled.div`
  flex: 1;
  display: flex;
  flex-direction: column;
  gap: 12px;
`;

const HeaderLine = styled.div`
  display: flex;
  align-items: center;
  height: 36px;
`;

const NameLine = styled(HeaderLine)`
  gap: 8px;
  padding: 0 4px 0 6px;
`;

const TextField = styled.input.attrs({ type: "text" })`
  ${field}
  flex: 1;
  min-width: 0;
  height: 36px;
  padding: 0 4px;
  outline: 0;
`;

const NameField = styled(TextField)`
  margin-left: 4px;
  font-weight: 600;
`;

const StaticButton = styled.button`
  display: flex;
  align-items: center;
  gap: 5px;
  color: #c4c4c4;
`;

const FieldLabel = styled.label`
  width: ${(p) => p.$width}px;
  color: #c4c4c4;
`;

const SelectWrap = styled.div`
  position: relative;
  flex: ${(p) => p.$grow};
  & > span {
    position: absolute;
    right: 12px;
    top: 14px;
    pointer-events: none;
  }
`;

const Select = styled.select`
  appearance: none;
  display: block;
  width: 100%;
  height: 36px;
  padding: 0 6px;
  background: #515151;
  border: 2px solid #303030;
  border-bottom-color: #242424;
  border-radius: 6px;
  color: #e4e4e4;
`;

const Component = styled.section`
  border-bottom: 2px solid #1a1a1a;
`;

const ComponentHeader = styled.div`
  display: flex;
  align-items: center;
  gap: 13px;
  height: 42px;
  padding: 0 14px 0 12px;
  background: #3e3e3e;
  border-bottom: 2px solid #303030;
`;

const ToggleSlot = styled.span`
  display: flex;
  width: 28px;
`;

const ComponentTitle = styled.h2`
  flex: 1;
  margin: 0;
  font-size: 24px;
  line-height: 32px;
  font-weight: 600;
`;

const HeaderActions = styled.div`
  display: flex;
  align-items: center;
  gap: 18px;
`;

const Properties = styled.div`
  display: flex;
  flex-direction: column;
  gap: 4px;
  padding: 8px 8px 18px 38px;
`;

const Property = styled.div`
  display: grid;
  grid-template-columns: 430px minmax(0, 1fr);
  align-items: center;
  height: 36px;
  color: ${(p) => (p.$dim ? "#7a7a7a" : "#c4c4c4")};
`;

const Axes = styled.div`
  display: grid;
  grid-template-columns: repeat(3, minmax(0, 1fr));
  gap: 8px;
`;

const Axis = styled.label`
  display: flex;
  align-items: center;
  gap: 4px;
  padding-left: 3px;
`;

const AxisName = styled.span`
  width: 17px;
`;

const ObjectField = styled.div`
  display: flex;
  align-items: center;
  gap: 6px;
  height: 36px;
  padding-left: 7px;
  background: #303030;
  border: 2px solid #292929;
  border-radius: 6px;
`;

const ObjectPicker = styled.button`
  display: grid;
  place-items: center;
  width: 36px;
  height: 32px;
  margin-left: auto;
  background: #353535;
`;

const AddButton = styled.button`
  display: block;
  width: 460px;
  height: 48px;
  margin: 16px auto;
  border: 2px solid #303030;
  border-bottom-color: #242424;
  border-radius: 6px;
  background: #585858;
  color: #eeeeee;
`;

const vectors = [
  { name: "Position", values: ["395.5128", "557.0817", "7.516602"] },
  { name: "Rotation", values: ["0", "0", "0"] },
  { name: "Scale", values: ["1", "1", "1"] },
];

function ComponentActions() {
  return (
    <HeaderActions>
      <IconButton aria-label="Help"><HelpIcon /></IconButton>
      <IconButton aria-label="Presets"><PresetIcon /></IconButton>
      <IconButton aria-label="Component menu"><KebabIcon /></IconButton>
    </HeaderActions>
  );
}

function Inspector() {
  return (
    <InspectorPanel>
      <TabBar>
        <InspectorTab $active><InfoIcon />Inspector</InspectorTab>
        <TabActions>
          <IconButton aria-label="Lock"><LockIcon /></IconButton>
          <IconButton aria-label="Menu"><KebabIcon /></IconButton>
        </TabActions>
      </TabBar>
      <ObjectHeader>
        <ObjectIcon aria-label="Object icon"><CubeIcon size={46} weight={3} /><Arrow /></ObjectIcon>
        <HeaderLines>
          <NameLine>
            <CheckBox defaultChecked aria-label="Object active" />
            <NameField defaultValue="ExceptionCheck" aria-label="Object name" />
            <CheckBox id="static" />
            <StaticButton as="div"><label htmlFor="static">Static</label><Arrow /></StaticButton>
          </NameLine>
          <HeaderLine>
            <FieldLabel $width={50} htmlFor="tag">Tag</FieldLabel>
            <SelectWrap $grow={453}>
              <Select id="tag"><option>Untagged</option></Select>
              <Arrow />
            </SelectWrap>
            <LayerLabel $width={71} htmlFor="layer">Layer</LayerLabel>
            <SelectWrap $grow={432}>
              <Select id="layer"><option>Default</option></Select>
              <Arrow />
            </SelectWrap>
          </HeaderLine>
        </HeaderLines>
      </ObjectHeader>

      <Component>
        <ComponentHeader>
          <Arrow $large />
          <AxesIcon />
          <ToggleSlot />
          <ComponentTitle>Transform</ComponentTitle>
          <ComponentActions />
        </ComponentHeader>
        <Properties>
          {vectors.map((v) => (
            <Property key={v.name}>
              <span>{v.name}</span>
              <Axes>
                {["X", "Y", "Z"].map((axis, i) => (
                  <Axis key={axis}>
                    <AxisName>{axis}</AxisName>
                    <TextField defaultValue={v.values[i]} />
                  </Axis>
                ))}
              </Axes>
            </Property>
          ))}
        </Properties>
      </Component>

      <Component>
        <ComponentHeader>
          <Arrow $large />
          <ScriptIcon width={24} height={28} />
          <ToggleSlot><CheckBox defaultChecked aria-label="Component enabled" /></ToggleSlot>
          <ComponentTitle>Exception Throw (Script)</ComponentTitle>
          <ComponentActions />
        </ComponentHeader>
        <Properties>
          <Property $dim>
            <span>Script</span>
            <ObjectField>
              <ScriptIcon width={18} height={20} paper="#929292" ink="#35502f" />
              ExceptionThrow
              <ObjectPicker aria-label="Pick script"><TargetIcon /></ObjectPicker>
            </ObjectField>
          </Property>
          <Property>
            <label htmlFor="flag">Exception Flag</label>
            <CheckBox id="flag" />
          </Property>
        </Properties>
      </Component>
      <AddButton>Add Component</AddButton>
    </InspectorPanel>
  );
}

const InspectorTab = styled(Tab)`
  padding-left: 18px;
`;

const LayerLabel = styled(FieldLabel)`
  margin-left: 27px;
`;

/* ---------- status bar ---------- */

const StatusBar = styled.footer`
  display: flex;
  align-items: flex-end;
`;

const StatusMessage = styled.button`
  flex: 1;
  display: flex;
  align-items: center;
  gap: 6px;
  height: 44px;
  padding-left: 6px;
  color: #c4c4c4;
  & svg {
    color: #eeeeee;
  }
`;

const StatusButton = styled(IconButton)`
  width: 52px;
  height: 40px;
  border-left: 2px solid #242424;
  &:last-child {
    width: 54px;
    border-right: 2px solid #242424;
  }
`;

export default function App() {
  return (
    <>
      <GlobalStyle />
      <Shell>
        <TopToolbar />
        <Workspace>
          <LeftArea>
            <UpperArea>
              <Hierarchy />
              <SceneView />
            </UpperArea>
            <Project />
          </LeftArea>
          <Inspector />
        </Workspace>
        <StatusBar>
          <StatusMessage><AlertIcon />例外有り</StatusMessage>
          <StatusButton aria-label="Debugger"><BugIcon /></StatusButton>
          <StatusButton aria-label="Cache server"><CacheIcon /></StatusButton>
          <StatusButton aria-label="Auto lighting"><LightingIcon /></StatusButton>
          <StatusButton aria-label="Background tasks"><ReadyIcon /></StatusButton>
        </StatusBar>
      </Shell>
    </>
  );
}
